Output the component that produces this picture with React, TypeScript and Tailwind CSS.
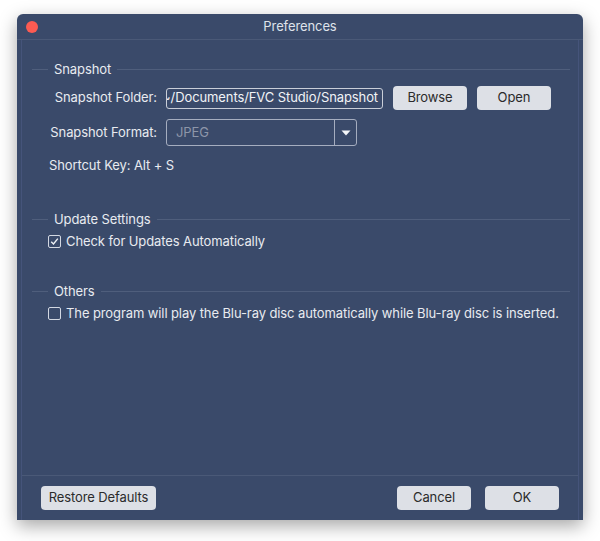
const font = { fontFamily: 'Inter, "Noto Sans", sans-serif', letterSpacing: '-0.1px' }

function SectionHeader({ title, className }: { title: string; className?: string }) {
  return (
    <div className={`flex h-[16px] items-center ${className ?? ''}`}>
      <div className="h-px w-[16px] bg-[#4f5e7c]" />
      <span className="px-[6px] text-[13px] leading-[16px] text-[#e8ebf0]">{title}</span>
      <div className="h-px flex-1 bg-[#4f5e7c]" />
    </div>
  )
}

function CheckRow({ checked, label, className }: { checked: boolean; label: string; className?: string }) {
  return (
    <div className={`flex h-[16px] items-center pl-[16px] ${className ?? ''}`}>
      <div className="flex h-[13px] w-[13px] items-center justify-center rounded-[2px] border border-[#d3d8e2]">
        {checked && (
          <svg width="9" height="9" viewBox="0 0 9 9">
            <path d="M1.2 4.8 L3.5 7 L7.8 1.6" fill="none" stroke="#eef1f5" strokeWidth="1.4" />
          </svg>
        )}
      </div>
      <span className="ml-[5px] text-[13px] leading-[16px] text-[#e8ebf0]">{label}</span>
    </div>
  )
}

function Button({ children, className }: { children: string; className?: string }) {
  return (
    <button
      type="button"
      className={`flex h-[24px] items-center justify-center rounded-[4px] bg-[#dde0e6] text-[13px] text-[#2b2b2b] ${className ?? ''}`}
    >
      {children}
    </button>
  )
}

export default function App() {
  return (
    <div className="min-h-[541px] w-[600px] bg-white pl-[17px] pt-[14px]" style={font}>
      <div className="flex h-[506px] w-[566px] flex-col rounded-t-[6px] bg-[#3a4a6a] shadow-[0_6px_18px_rgba(0,0,0,0.35)]">
        {/* title bar */}
        <div className="relative flex h-[26px] items-center justify-center border-b border-[#4a5977]">
          <div className="absolute left-[9px] top-[7px] h-[12px] w-[12px] rounded-full bg-[#fc5b52]" />
          <span className="text-[13px] text-[#dfe3ea]">Preferences</span>
        </div>

        {/* body */}
        <div className="mx-[4px] flex flex-1 flex-col border-x border-[#45547a]">
          <div className="flex flex-1 flex-col pl-[10px] pr-[8px]">
            <SectionHeader title="Snapshot" className="mt-[21px]" />

            <div className="mt-[9px] flex h-[24px] items-center">
              <div className="w-[125px] text-right text-[13px] text-[#e8ebf0]">Snapshot Folder:</div>
              <div className="ml-[9px] flex h-[21px] w-[217px] items-center justify-end overflow-hidden whitespace-nowrap rounded-[3px] border border-[#c9ced8] pr-[4px] text-[13px] text-[#f1f3f6]">
                ~/Documents/FVC Studio/Snapshot
              </div>
              <Button className="ml-[10px] w-[74px]">Browse</Button>
              <Button className="ml-[10px] w-[74px]">Open</Button>
            </div>

            <div className="mt-[9px] flex h-[27px] items-center">
              <div className="w-[125px] text-right text-[13px] text-[#e8ebf0]">Snapshot Format:</div>
              <div className="ml-[9px] flex h-[27px] w-[191px] rounded-[3px] border border-[#a5adbf]">
                <div className="flex flex-1 items-center pl-[9px] text-[13px] text-[#8d96a9]">JPEG</div>
                <div className="flex w-[22px] items-center justify-center border-l border-[#a5adbf]">
                  <svg width="10" height="6" viewBox="0 0 10 6">
                    <path d="M0.5 0.5 L9.5 0.5 L5 5.5 Z" fill="#f4f6f9" />
                  </svg>
                </div>
              </div>
            </div>

            <div className="mt-[11px] h-[16px] pl-[17px] text-[13px] leading-[16px] text-[#e8ebf0]">Shortcut Key: Alt + S</div>

            <SectionHeader title="Update Settings" className="mt-[38px]" />
            <CheckRow checked label="Check for Updates Automatically" className="mt-[6px]" />

            <SectionHeader title="Others" className="mt-[34px]" />
            <CheckRow
              checked={false}
              label="The program will play the Blu-ray disc automatically while Blu-ray disc is inserted."
              className="mt-[6px]"
            />
          </div>

          {/* footer */}
          <div className="flex h-[45px] items-start border-t border-[#4a5977] pl-[19px] pr-[19px] pt-[10px]">
            <Button className="w-[115px]">Restore Defaults</Button>
            <div className="flex-1" />
            <Button className="w-[74px]">Cancel</Button>
            <Button className="ml-[14px] w-[74px]">OK</Button>
          </div>
        </div>
      </div>
    </div>
  )
}
